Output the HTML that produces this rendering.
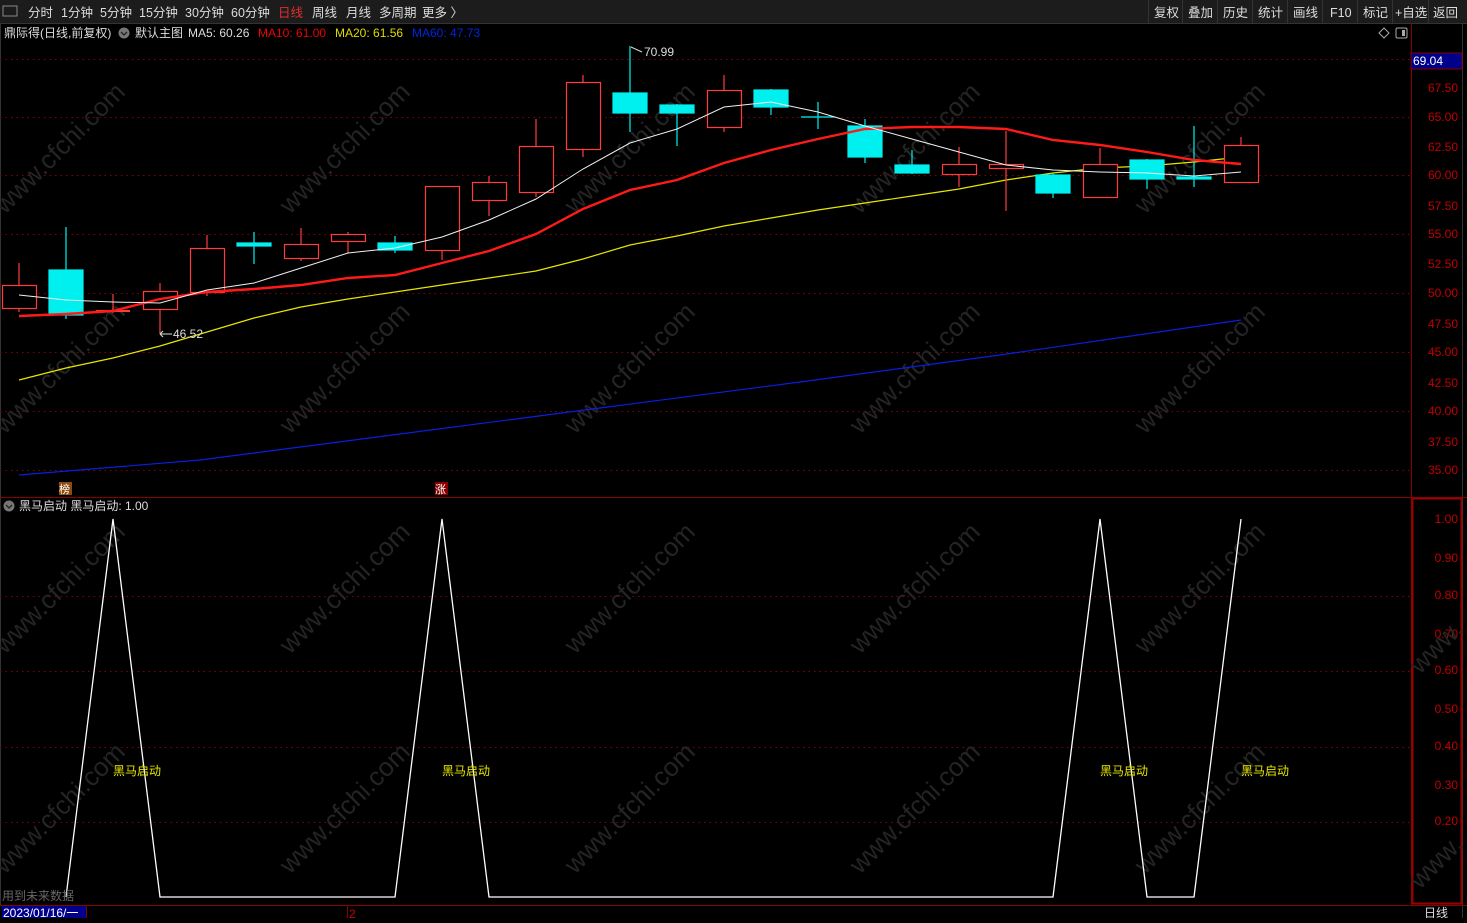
<!DOCTYPE html>
<html><head><meta charset="utf-8"><style>
body{margin:0;background:#000;width:1467px;height:918px;overflow:hidden;font-family:"Liberation Sans","Noto Sans CJK SC",sans-serif;}
svg text{font-family:"Liberation Sans","Noto Sans CJK SC",sans-serif;}
</style></head><body>
<svg width="1467" height="918" xmlns="http://www.w3.org/2000/svg">
<rect width="1467" height="918" fill="#000"/>
<!-- toolbar -->
<rect x="0" y="0" width="1467" height="23" fill="#1c1c1c"/>
<line x1="0" y1="23.5" x2="1467" y2="23.5" stroke="#333"/>
<rect x="3" y="6" width="14" height="10" fill="none" stroke="#888"/>
<g font-size="12.5" fill="#ddd">
<text x="28" y="17">分时</text><text x="61" y="17">1分钟</text><text x="100" y="17">5分钟</text><text x="139" y="17">15分钟</text><text x="185" y="17">30分钟</text><text x="231" y="17">60分钟</text><text x="278" y="17" fill="#e03030">日线</text><text x="312" y="17">周线</text><text x="346" y="17">月线</text><text x="379" y="17">多周期</text><text x="422" y="17">更多 〉</text>
</g>
<g font-size="12.5" fill="#ddd">
<line x1="1148.5" y1="0" x2="1148.5" y2="23" stroke="#333"/>
<text x="1154" y="17">复权</text><line x1="1182.5" y1="0" x2="1182.5" y2="23" stroke="#333"/>
<text x="1188" y="17">叠加</text><line x1="1217.5" y1="0" x2="1217.5" y2="23" stroke="#333"/>
<text x="1223" y="17">历史</text><line x1="1252.5" y1="0" x2="1252.5" y2="23" stroke="#333"/>
<text x="1258" y="17">统计</text><line x1="1287.5" y1="0" x2="1287.5" y2="23" stroke="#333"/>
<text x="1293" y="17">画线</text><line x1="1322.5" y1="0" x2="1322.5" y2="23" stroke="#333"/>
<text x="1330" y="17">F10</text><line x1="1357.5" y1="0" x2="1357.5" y2="23" stroke="#333"/>
<text x="1363" y="17">标记</text><line x1="1392.5" y1="0" x2="1392.5" y2="23" stroke="#333"/>
<text x="1395" y="17">+自选</text><line x1="1428.5" y1="0" x2="1428.5" y2="23" stroke="#333"/>
<text x="1433" y="17">返回</text>
</g>
<!-- header line -->
<g font-size="12">
<text x="4" y="37" fill="#ddd">鼎际得(日线,前复权)</text>
<circle cx="124" cy="33" r="5.5" fill="#777"/><path d="M121 32 L124 35 L127 32" stroke="#222" fill="none" stroke-width="1.3"/>
<text x="135" y="37" fill="#ddd">默认主图</text>
<text x="188" y="37" fill="#ddd">MA5: 60.26</text>
<text x="258" y="37" fill="#e00">MA10: 61.00</text>
<text x="335" y="37" fill="#dd0">MA20: 61.56</text>
<text x="412" y="37" fill="#0026e0">MA60: 47.73</text>
</g>
<path d="M1384 28 L1389 33 L1384 38 L1379 33Z" fill="none" stroke="#aaa"/>
<rect x="1396" y="28" width="11" height="10" rx="1.5" fill="none" stroke="#aaa"/><rect x="1402" y="30" width="3" height="6" fill="#aaa"/>
<!-- axes -->
<line x1="1411.5" y1="24" x2="1411.5" y2="905" stroke="#800"/>
<line x1="1462.5" y1="24" x2="1462.5" y2="918" stroke="#333"/>
<line x1="0" y1="497.5" x2="1467" y2="497.5" stroke="#800"/>
<line x1="0" y1="905.5" x2="1467" y2="905.5" stroke="#800"/>
<line x1="0.5" y1="24" x2="0.5" y2="905" stroke="#333"/>
<rect x="1412.5" y="498.5" width="49" height="405" fill="none" stroke="#900" stroke-width="2"/>
<!-- grid -->
<g stroke="#8a0000" stroke-dasharray="1.5 4">
<line x1="0" y1="59.5" x2="1410" y2="59.5"/><line x1="0" y1="117.5" x2="1410" y2="117.5"/><line x1="0" y1="175.5" x2="1410" y2="175.5"/><line x1="0" y1="234.5" x2="1410" y2="234.5"/><line x1="0" y1="293.5" x2="1410" y2="293.5"/><line x1="0" y1="352.5" x2="1410" y2="352.5"/><line x1="0" y1="411.5" x2="1410" y2="411.5"/><line x1="0" y1="470.5" x2="1410" y2="470.5"/>
<line x1="0" y1="596.5" x2="1410" y2="596.5"/><line x1="0" y1="671.5" x2="1410" y2="671.5"/><line x1="0" y1="747.5" x2="1410" y2="747.5"/><line x1="0" y1="822.5" x2="1410" y2="822.5"/>
</g>
<!-- price labels -->
<rect x="1411" y="53" width="51" height="16" fill="#00008a" stroke="#800"/>
<text x="1413" y="65" font-size="12" fill="#fff">69.04</text>
<g font-size="12" fill="#c00000" text-anchor="end">
<text x="1458" y="92">67.50</text><text x="1458" y="121">65.00</text><text x="1458" y="151">62.50</text><text x="1458" y="179">60.00</text><text x="1458" y="210">57.50</text><text x="1458" y="238">55.00</text><text x="1458" y="268">52.50</text><text x="1458" y="297">50.00</text><text x="1458" y="328">47.50</text><text x="1458" y="356">45.00</text><text x="1458" y="387">42.50</text><text x="1458" y="415">40.00</text><text x="1458" y="446">37.50</text><text x="1458" y="474">35.00</text>
<text x="1458" y="523">1.00</text><text x="1458" y="562">0.90</text><text x="1458" y="599">0.80</text><text x="1458" y="638">0.70</text><text x="1458" y="674">0.60</text><text x="1458" y="713">0.50</text><text x="1458" y="750">0.40</text><text x="1458" y="789">0.30</text><text x="1458" y="825">0.20</text>
</g>
<!-- watermarks -->
<g font-size="26" fill="#242424" font-family="Liberation Sans">
<text transform="translate(5,215) rotate(-45)">www.cfchi.com</text>
<text transform="translate(290,215) rotate(-45)">www.cfchi.com</text>
<text transform="translate(575,215) rotate(-45)">www.cfchi.com</text>
<text transform="translate(860,215) rotate(-45)">www.cfchi.com</text>
<text transform="translate(1145,215) rotate(-45)">www.cfchi.com</text>
<text transform="translate(5,435) rotate(-45)">www.cfchi.com</text>
<text transform="translate(290,435) rotate(-45)">www.cfchi.com</text>
<text transform="translate(575,435) rotate(-45)">www.cfchi.com</text>
<text transform="translate(860,435) rotate(-45)">www.cfchi.com</text>
<text transform="translate(1145,435) rotate(-45)">www.cfchi.com</text>
<text transform="translate(5,655) rotate(-45)">www.cfchi.com</text>
<text transform="translate(290,655) rotate(-45)">www.cfchi.com</text>
<text transform="translate(575,655) rotate(-45)">www.cfchi.com</text>
<text transform="translate(860,655) rotate(-45)">www.cfchi.com</text>
<text transform="translate(1145,655) rotate(-45)">www.cfchi.com</text>
<text transform="translate(5,875) rotate(-45)">www.cfchi.com</text>
<text transform="translate(290,875) rotate(-45)">www.cfchi.com</text>
<text transform="translate(575,875) rotate(-45)">www.cfchi.com</text>
<text transform="translate(860,875) rotate(-45)">www.cfchi.com</text>
<text transform="translate(1145,875) rotate(-45)">www.cfchi.com</text>
<text transform="translate(1420,675) rotate(-45)">www.</text>
<text transform="translate(1420,890) rotate(-45)">www.</text>
</g>
<!-- MA60 -->
<polyline fill="none" stroke="#0a1ee0" stroke-width="1.2" points="19,475 200,460 400,434 600,408 800,382 1000,355 1241,320"/>
<!-- MA20 -->
<polyline fill="none" stroke="#e6e600" stroke-width="1.2" points="19,380 66,368 113,358 160,346 207,332 254,318 301,307 348,299 395,292 442,285 489,278 536,271 583,259 630,245 677,236 724,226 771,218 818,210 865,203 912,196 959,189 1006,180 1053,173 1100,168 1147,166 1194,162 1241,157"/>
<!-- candles -->
<g stroke-width="1.2">
<g stroke="#ff3c3c" fill="#000">
<line x1="19" y1="263" x2="19" y2="312"/><rect x="2.5" y="285.5" width="34" height="23"/>
<line x1="113" y1="294" x2="113" y2="313"/><line x1="96" y1="311" x2="130" y2="311" stroke-width="2"/>
<line x1="160" y1="283" x2="160" y2="334"/><rect x="143.5" y="291.5" width="34" height="18"/>
<line x1="207" y1="235" x2="207" y2="296"/><rect x="190.5" y="248.5" width="34" height="44"/>
<line x1="301" y1="228" x2="301" y2="261"/><rect x="284.5" y="244.5" width="34" height="14"/>
<line x1="348" y1="232" x2="348" y2="253"/><rect x="331.5" y="234.5" width="34" height="7"/>
<line x1="442" y1="186" x2="442" y2="260"/><rect x="425.5" y="186.5" width="34" height="64"/>
<line x1="489" y1="176" x2="489" y2="216"/><rect x="472.5" y="182.5" width="34" height="18"/>
<line x1="536" y1="119" x2="536" y2="197"/><rect x="519.5" y="146.5" width="34" height="46"/>
<line x1="583" y1="75" x2="583" y2="157"/><rect x="566.5" y="82.5" width="34" height="67"/>
<line x1="724" y1="75" x2="724" y2="132"/><rect x="707.5" y="90.5" width="34" height="37"/>
<line x1="959" y1="147" x2="959" y2="187"/><rect x="942.5" y="164.5" width="34" height="10"/>
<line x1="1006" y1="131" x2="1006" y2="211"/><rect x="989.5" y="164.5" width="34" height="4"/>
<line x1="1100" y1="148" x2="1100" y2="198"/><rect x="1083.5" y="164.5" width="34" height="33"/>
<line x1="1241" y1="137" x2="1241" y2="183"/><rect x="1224.5" y="145.5" width="34" height="37"/>
</g>
<g stroke="#00f0f0" fill="#00f0f0">
<line x1="66" y1="227" x2="66" y2="319"/><rect x="49" y="270" width="34" height="45"/>
<line x1="254" y1="232" x2="254" y2="264"/><rect x="237" y="243" width="34" height="3"/>
<line x1="395" y1="236" x2="395" y2="253"/><rect x="378" y="243" width="34" height="7"/>
<line x1="630" y1="46" x2="630" y2="132"/><rect x="613" y="93" width="34" height="20"/>
<line x1="677" y1="104" x2="677" y2="146"/><rect x="660" y="105" width="34" height="8"/>
<line x1="771" y1="89" x2="771" y2="115"/><rect x="754" y="90" width="34" height="17"/>
<line x1="818" y1="102" x2="818" y2="129"/><line x1="801" y1="117" x2="835" y2="117"/>
<line x1="865" y1="119" x2="865" y2="163"/><rect x="848" y="126" width="34" height="31"/>
<line x1="912" y1="150" x2="912" y2="174"/><rect x="895" y="165" width="34" height="8"/>
<line x1="1053" y1="173" x2="1053" y2="198"/><rect x="1036" y="175" width="34" height="18"/>
<line x1="1147" y1="159" x2="1147" y2="189"/><rect x="1130" y="160" width="34" height="19"/>
<line x1="1194" y1="126" x2="1194" y2="187"/><rect x="1177" y="177" width="34" height="2"/>
</g>
</g>
<!-- MA10 -->
<polyline fill="none" stroke="#ff1a1a" stroke-width="2.4" points="19,316 66,314 113,311 160,299 207,292 254,289 301,285 348,278 395,275 442,263 489,251 536,234 583,209 630,190 677,180 724,163 771,150 818,139 865,129 912,127 959,127 1006,129 1053,140 1100,145 1147,152 1194,160 1241,164"/>
<!-- MA5 -->
<polyline fill="none" stroke="#f0f0f0" stroke-width="1" points="19,295 66,300 113,302 160,303 207,290 254,283 301,268 348,253 395,248 442,237 489,220 536,199 583,169 630,143 677,129 724,107 771,102 818,112 865,126 912,139 959,152 1006,165 1053,170 1100,172 1147,173 1194,176 1241,172"/>
<!-- labels -->
<g font-size="12" fill="#ddd">
<text x="644" y="56">70.99</text><path d="M631 47 L642 52" stroke="#ddd"/>
<text x="173" y="338">46.52</text><path d="M160 334 L172 334 M160 334 L163 331 M160 334 L163 337" stroke="#ddd"/>
</g>
<rect x="59" y="482" width="13" height="13" fill="#8a4a10"/><text x="59" y="493" font-size="11" fill="#fff">榜</text>
<rect x="435" y="482" width="13" height="13" fill="#8a0000"/><text x="435" y="493" font-size="11" fill="#fff">涨</text>
<!-- lower panel -->
<circle cx="9" cy="506" r="5.5" fill="#777"/><path d="M6 505 L9 508 L12 505" stroke="#222" fill="none" stroke-width="1.3"/>
<text x="19" y="510" font-size="12" fill="#ddd">黑马启动 黑马启动: 1.00</text>
<polyline fill="none" stroke="#fff" stroke-width="1.3" points="66,897 113,519 160,897 395,897 442,519 489,897 1053,897 1100,519 1147,897 1194,897 1241,519"/>
<g font-size="12" fill="#e6e600">
<text x="113" y="775">黑马启动</text><text x="442" y="775">黑马启动</text><text x="1100" y="775">黑马启动</text><text x="1241" y="775">黑马启动</text>
</g>
<text x="2" y="900" font-size="12" fill="#666">用到未来数据</text>
<!-- bottom bar -->
<rect x="2" y="906" width="84" height="12" fill="#00008a"/>
<line x1="86.5" y1="906" x2="86.5" y2="918" stroke="#800"/>
<text x="3" y="917" font-size="12" fill="#fff">2023/01/16/一</text>
<line x1="347.5" y1="906" x2="347.5" y2="918" stroke="#800"/>
<text x="349" y="918" font-size="12" fill="#c00">2</text>
<text x="1424" y="917" font-size="12" fill="#ddd">日线</text>
</svg>
</body></html>
